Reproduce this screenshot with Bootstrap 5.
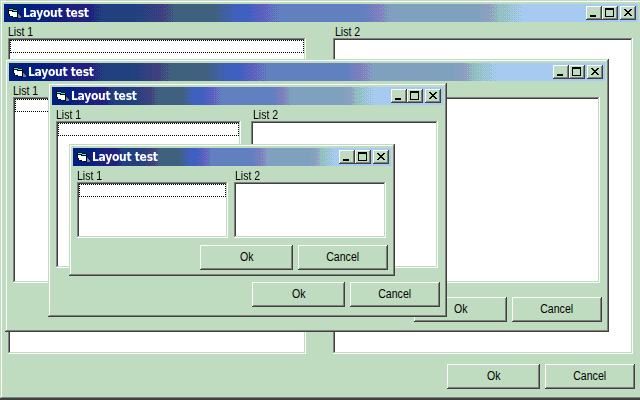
<!DOCTYPE html>
<html lang="en">
<head>
<meta charset="utf-8">
<meta name="viewport" content="width=device-width, initial-scale=1">
<title>Layout test</title>
<link href="https://cdn.jsdelivr.net/npm/bootstrap@5.3.0/dist/css/bootstrap.min.css" rel="stylesheet">
<style>
:root{--face:#c0dcc0;--shade:#808080;--dark:#404040}
body{width:640px;height:400px;background:#404040;font:12px/14px "Liberation Sans",Arial,sans-serif;color:#000}
.desk{width:640px;height:400px}
/* overlapping windows on the desktop */
.win{background:var(--face);padding:4px;box-shadow:inset -1px -1px var(--dark),inset 1px 1px var(--face),inset -2px -2px var(--shade),inset 2px 2px #fff}
.w1{left:0;top:0;width:642px;height:399px}
.w2{left:5px;top:59px;width:604px;height:273px}
.w3{left:48px;top:83px;width:399px;height:234px}
.w4{left:69px;top:144px;width:326px;height:132px}
.bar{height:18px;padding:0 2px 0 4px;background:#002080}
.bar canvas{left:0;top:0}
.bar svg,.bar .ttl,.bar .ctl{position:relative}
.ttl{font:bold 12px/18px "DejaVu Sans Condensed","DejaVu Sans",sans-serif;color:#fff;white-space:nowrap;margin-left:2px;letter-spacing:-.3px}
.ctl{width:16px;height:14px}
.raised{background:var(--face);border:0;padding:0;box-shadow:inset -1px -1px var(--dark),inset 1px 1px #fff,inset -2px -2px var(--shade)}
.cols{padding-left:4px}
.cap{height:16px;line-height:20px;white-space:nowrap}
.cap span,.cmd span{display:inline-block;transform:scaleX(.88)}
.cap span{transform-origin:0 0}
.b .cap{padding-left:1px}
.w1 .b .cap,.w3 .b .cap{padding-left:2px}
.box{background:#fff;padding:2px;box-shadow:inset -1px -1px #fff,inset 1px 1px var(--shade),inset -2px -2px var(--face),inset 2px 2px var(--dark)}
.sel{height:13px;border:1px dotted #000}
.cmd{height:25px;line-height:22px;padding-bottom:1px;text-align:center}
.acts{gap:5px}
.ok{width:93px}.no{width:90px}
.w1 .a{width:298px}.w1 .b{width:300px}.w1 .box{height:316px}.w1 .cols{gap:27px}.w1 .acts{margin-top:10px;padding-right:3px}
.w2 .a{width:285px}.w2 .b{width:284px}.w2 .box{height:186px}.w2 .cols{gap:18px}.w2 .acts{margin-top:14px;padding-right:3px}
.w3 .a{width:185px}.w3 .b{width:187px}.w3 .box{height:147px}.w3 .cols{gap:10px}.w3 .acts{margin-top:14px;padding-right:3px}
.w4 .a{width:151px}.w4 .b{width:152px}.w4 .box{height:56px}.w4 .cols{gap:6px}.w4 .acts{margin-top:7px;padding-right:3px}
</style>
</head>
<body class="overflow-hidden">
<main class="desk position-relative overflow-hidden"></main>
<template id="window">
  <div class="bar d-flex align-items-center position-relative overflow-hidden">
    <canvas class="position-absolute" height="18"></canvas>
    <svg width="13" height="12" viewBox="0 0 13 12" shape-rendering="crispEdges"><path d="M0 1h5v1h4v1h1v8H7v-1H3V9H1V7H0z" fill="#000"/><path d="M1 2h4v1h4v1H5V3H1z" fill="#0ff"/><path d="M1 4h3v1h5v5H5V9H2V7H1z" fill="#fff"/><path d="M10 7h1v1h1v1h1v2h-3z" fill="#808080"/></svg>
    <div class="ttl">Layout test</div>
    <div class="ctl raised ms-auto"><svg class="d-block" width="16" height="14" shape-rendering="crispEdges"><path d="M4 9h6v2H4z"/></svg></div>
    <div class="ctl raised max"><svg class="d-block" width="16" height="14" shape-rendering="crispEdges"><path d="M3 2h9v9H3zM4 4v6h7V4z" fill-rule="evenodd"/></svg></div>
    <div class="ctl raised"><svg class="d-block" width="16" height="14" shape-rendering="crispEdges"><path d="M4 3h2v1h1v1h2V4h1V3h2v1h-1v1h-1v1H9v1h1v1h1v1h1v1h-2V9H9V8H7v1H6v1H4V9h1V8h1V7h1V6H6V5H5V4H4z"/></svg></div>
  </div>
  <div class="cols d-flex">
    <div class="a"><div class="cap"><span>List 1</span></div><div class="box"><div class="sel"></div></div></div>
    <div class="b"><div class="cap"><span>List 2</span></div><div class="box"></div></div>
  </div>
  <div class="acts d-flex justify-content-end">
    <button class="cmd raised ok" type="button"><span>Ok</span></button>
    <button class="cmd raised no" type="button"><span>Cancel</span></button>
  </div>
</template>
<script src="https://cdn.jsdelivr.net/npm/bootstrap@5.3.0/dist/js/bootstrap.bundle.min.js"></script>
<script>
// Title gradient: flat palette colours joined by ordered dithering.
const stops=[[0,[0,32,128]],[.04,[0,32,128]],[.11,[32,32,128]],[.135,[32,32,128]],[.155,[32,64,128]],[.205,[32,64,128]],[.25,[64,64,128]],[.27,[64,96,128]],[.33,[64,96,128]],[.365,[64,96,192]],[.385,[64,96,192]],[.41,[96,96,192]],[.435,[96,128,192]],[.565,[96,128,192]],[.59,[128,128,192]],[.61,[128,160,192]],[.745,[128,160,192]],[.765,[144,160,192]],[.78,[144,192,192]],[.82,[166,202,240]],[1,[166,202,240]]];
const bayer=[0,8,2,10,12,4,14,6,3,11,1,9,15,7,13,5];
const desk=document.querySelector('.desk'),tpl=document.getElementById('window');
for(let n=1;n<5;n++){
  const w=document.createElement('section');
  w.className='win position-absolute w'+n;
  w.append(tpl.content.cloneNode(true));
  desk.append(w);
  w.querySelector('.max').style.marginRight='2px';
  const c=w.querySelector('canvas'),W=c.width=c.parentNode.clientWidth,g=c.getContext('2d'),im=g.createImageData(W,18);
  for(let x=0;x<W;x++){
    const p=x/W;let i=0;while(i<stops.length-2&&stops[i+1][0]<=p)i++;
    const t=(p-stops[i][0])/(stops[i+1][0]-stops[i][0]);
    for(let y=0;y<18;y++){
      const k=t>(bayer[(y%4)*4+x%4]+.5)/16?stops[i+1][1]:stops[i][1];
      im.data.set([k[0],k[1],k[2],255],(y*W+x)*4);
    }
  }
  g.putImageData(im,0,0);
}
</script>
</body>
</html>
